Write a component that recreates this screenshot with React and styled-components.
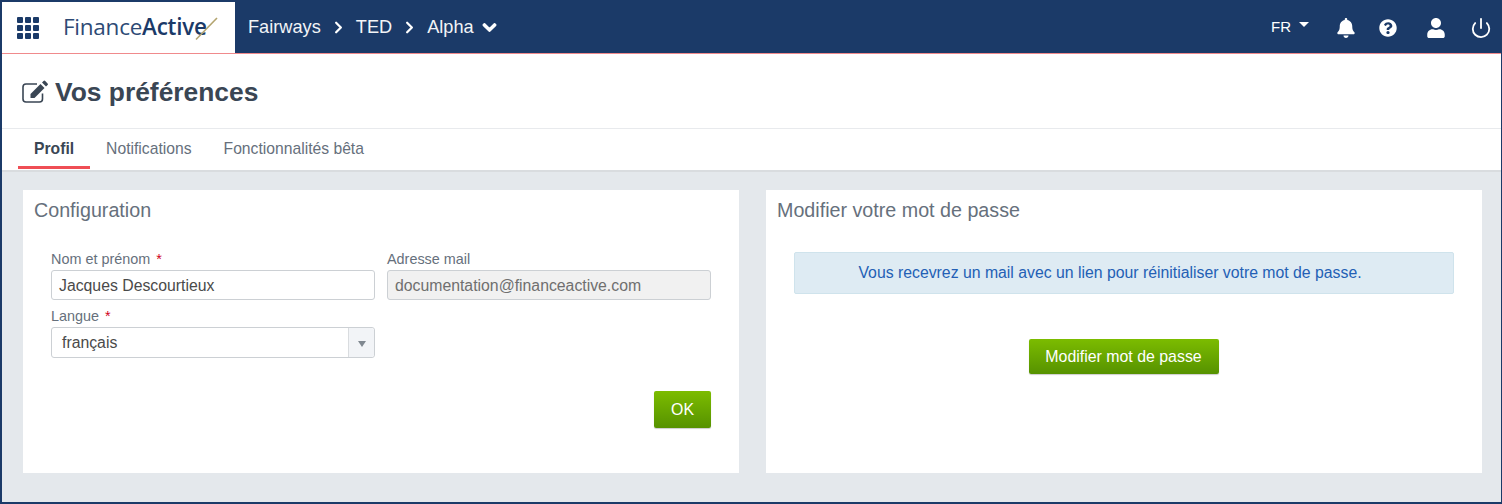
import styled, { createGlobalStyle } from "styled-components";
import { FaBell, FaChevronDown, FaQuestionCircle, FaUser } from "react-icons/fa";
import { ChevronRight, Power } from "lucide-react";

const GlobalStyle = createGlobalStyle`
  html, body {
    margin: 0;
    padding: 0;
    background: #e4e8ec;
    font-family: "Liberation Sans", Arial, sans-serif;
  }
  * { box-sizing: border-box; }
`;

const Frame = styled.div`
  width: 1502px;
  height: 504px;
  display: flex;
  flex-direction: column;
  overflow: hidden;
  background: #e4e8ec;
  border: 2px solid #1b3a68;
  border-right-width: 1px;
`;

const Header = styled.header`
  height: 52px;
  flex: none;
  display: flex;
  background: #1b3a68;
  border-bottom: 1px solid #f08a8c;
`;

const Brand = styled.div`
  width: 233px;
  display: flex;
  align-items: center;
  padding-left: 15px;
  background: #fff;
`;

const Grid = styled.div`
  display: grid;
  grid-template-columns: repeat(3, 6px);
  grid-auto-rows: 6px;
  gap: 2px;
  margin-right: 24px;
`;

const Dot = styled.span`
  background: #1b3a68;
  border-radius: 1px;
`;

const Logo = styled.div`
  position: relative;
  font-family: "Open Sans", "Liberation Sans", sans-serif;
  font-size: 22.5px;
  font-weight: 400;
  letter-spacing: -0.25px;
  color: #2d4a75;
  margin-top: -3px;
  b {
    font-weight: 600;
    color: #1b3a68;
  }
`;

const LogoSlash = styled.svg`
  position: absolute;
  left: 132px;
  top: 6px;
`;

const Crumbs = styled.nav`
  display: flex;
  align-items: center;
  gap: 8px;
  padding-left: 13px;
  color: #fff;
  font-size: 18.2px;
  flex: 1;
`;

const Crumb = styled.span`
  color: #f2f4f7;
`;

const Actions = styled.div`
  display: flex;
  align-items: center;
  color: #fff;
  padding-right: 9px;
`;

const Lang = styled.div`
  display: flex;
  align-items: center;
  gap: 8px;
  font-size: 15px;
  margin-right: 27px;
  padding-bottom: 2px;
  &::after {
    content: "";
    margin-top: -4px;
    border-left: 5px solid transparent;
    border-right: 5px solid transparent;
    border-top: 5px solid #fff;
  }
`;

const Action = styled.span`
  display: flex;
  align-items: center;
  justify-content: center;
  width: ${(p) => p.$w}px;
  margin-left: ${(p) => p.$gap}px;
`;

const TitleBar = styled.div`
  height: 75px;
  flex: none;
  display: flex;
  align-items: center;
  gap: 6px;
  padding: 2px 0 0 20px;
  background: #fff;
  border-bottom: 1px solid #e8eaed;
  color: #3a4654;
`;

const Title = styled.h1`
  margin: 0;
  font-size: 26.4px;
  font-weight: 700;
  color: #3a4654;
`;

const Tabs = styled.div`
  height: 43px;
  flex: none;
  display: flex;
  padding-left: 16px;
  background: #fff;
  border-bottom: 2px solid #d9dcdf;
`;

const Tab = styled.div`
  height: 40px;
  padding: 11px 16px 0;
  font-size: 15.7px;
  font-weight: ${(p) => (p.$active ? 700 : 400)};
  color: ${(p) => (p.$active ? "#3a4654" : "#66707c")};
  border-bottom: ${(p) => (p.$active ? "3px solid #ef4e55" : "none")};
`;

const Content = styled.main`
  display: grid;
  grid-template-columns: 716px 716px;
  column-gap: 27px;
  padding: 18px 0 0 21px;
`;

const Card = styled.section`
  height: 283px;
  background: #fff;
  padding: 9px 11px;
  display: flex;
  flex-direction: column;
`;

const CardTitle = styled.h2`
  margin: 0;
  font-size: 19.7px;
  line-height: 22px;
  font-weight: 400;
  color: #66707c;
`;

const Form = styled.div`
  display: grid;
  grid-template-columns: 324px 324px;
  column-gap: 12px;
  padding: 29px 0 0 17px;
`;

const Field = styled.div`
  display: flex;
  flex-direction: column;
  margin-bottom: 7px;
`;

const Label = styled.label`
  font-size: 14.4px;
  line-height: 18px;
  margin-bottom: 2px;
  color: #66707c;
  em {
    font-style: normal;
    color: #d0021b;
    margin-left: 2px;
  }
`;

const Input = styled.div`
  height: 30px;
  padding: 1px 0 0 7px;
  display: flex;
  align-items: center;
  font-size: 15.8px;
  border: 1px solid #ccd0d4;
  border-radius: 3px;
  color: ${(p) => (p.$disabled ? "#6f6f6f" : "#4a4a4a")};
  background: ${(p) => (p.$disabled ? "#f1f1f1" : "#fff")};
`;

const Select = styled.div`
  height: 31px;
  display: flex;
  align-items: center;
  justify-content: space-between;
  padding-left: 10px;
  font-size: 15.8px;
  color: #4a4a4a;
  border: 1px solid #ccd0d4;
  border-radius: 3px;
`;

const SelectArrow = styled.span`
  width: 26px;
  height: 100%;
  display: flex;
  align-items: center;
  justify-content: center;
  background: #f2f4f7;
  border-left: 1px solid #d9dcdf;
  border-radius: 0 3px 3px 0;
  &::after {
    content: "";
    margin-top: 2px;
    border-left: 4px solid transparent;
    border-right: 4px solid transparent;
    border-top: 6px solid #808890;
  }
`;

const FormActions = styled.div`
  display: flex;
  justify-content: flex-end;
  padding-top: 26px;
  width: 677px;
`;

const Button = styled.button`
  height: ${(p) => p.$h}px;
  width: ${(p) => p.$w}px;
  padding: 0;
  border: none;
  border-radius: 2px;
  font-family: inherit;
  font-size: 15.9px;
  color: #fff;
  background: linear-gradient(#7cbc00, #569200);
  box-shadow: 0 1px 1px rgba(0, 0, 0, 0.2);
`;

const Notice = styled.div`
  height: 42px;
  margin: 31px 17px 0;
  padding-right: 28px;
  display: flex;
  align-items: center;
  justify-content: center;
  font-size: 15.8px;
  color: #2360b5;
  background: #deebf3;
  border: 1px solid #cfe3ec;
  border-radius: 2px;
`;

const CenteredAction = styled.div`
  display: flex;
  justify-content: center;
  padding: 45px 1px 0 0;
`;

const EditIcon = () => (
  <svg width="27" height="24" viewBox="0 0 27 24">
    <path
      d="M20.5 13.5 V19 a3 3 0 0 1 -3 3 H4 a3 3 0 0 1 -3 -3 V7 a3 3 0 0 1 3 -3 H15"
      stroke="currentColor"
      strokeWidth="1.6"
      fill="none"
    />
    <path d="M8.5 14 L18.5 4 L22.5 8 L12.5 18 H8.5 Z" fill="currentColor" />
    <path d="M20 2.5 L21.5 1 a1.2 1.2 0 0 1 1.7 0 L25.6 3.4 a1.2 1.2 0 0 1 0 1.7 L24 6.5 Z" fill="currentColor" />
  </svg>
);

export default function App() {
  return (
    <>
      <GlobalStyle />
      <Frame>
        <Header>
          <Brand>
            <Grid>
              {Array.from({ length: 9 }, (_, i) => (
                <Dot key={i} />
              ))}
            </Grid>
            <Logo>
              Finance<b>Active</b>
              <LogoSlash width="24" height="24" viewBox="0 0 24 24">
                <path d="M1 22.5 L22 1" stroke="#b3a46f" strokeWidth="1.6" fill="none" />
              </LogoSlash>
            </Logo>
          </Brand>
          <Crumbs>
            <Crumb>Fairways</Crumb>
            <ChevronRight size={19} strokeWidth={2.8} />
            <Crumb>TED</Crumb>
            <ChevronRight size={19} strokeWidth={2.8} />
            <Crumb>Alpha</Crumb>
            <FaChevronDown size={15} stroke="currentColor" strokeWidth={40} />
          </Crumbs>
          <Actions>
            <Lang>FR</Lang>
            <Action $w={20} $gap={0}>
              <FaBell size={20} />
            </Action>
            <Action $w={18} $gap={23}>
              <FaQuestionCircle size={18} />
            </Action>
            <Action $w={20} $gap={29}>
              <FaUser size={20} />
            </Action>
            <Action $w={22} $gap={24}>
              <Power size={22} strokeWidth={2} />
            </Action>
          </Actions>
        </Header>
        <TitleBar>
          <EditIcon />
          <Title>Vos préférences</Title>
        </TitleBar>
        <Tabs>
          <Tab $active>Profil</Tab>
          <Tab>Notifications</Tab>
          <Tab>Fonctionnalités bêta</Tab>
        </Tabs>
        <Content>
          <Card>
            <CardTitle>Configuration</CardTitle>
            <Form>
              <Field>
                <Label>
                  Nom et prénom <em>*</em>
                </Label>
                <Input>Jacques Descourtieux</Input>
              </Field>
              <Field>
                <Label>Adresse mail</Label>
                <Input $disabled>documentation@financeactive.com</Input>
              </Field>
              <Field>
                <Label>
                  Langue <em>*</em>
                </Label>
                <Select>
                  français
                  <SelectArrow />
                </Select>
              </Field>
            </Form>
            <FormActions>
              <Button $w={57} $h={37}>OK</Button>
            </FormActions>
          </Card>
          <Card>
            <CardTitle>Modifier votre mot de passe</CardTitle>
            <Notice>Vous recevrez un mail avec un lien pour réinitialiser votre mot de passe.</Notice>
            <CenteredAction>
              <Button $w={190} $h={35}>Modifier mot de passe</Button>
            </CenteredAction>
          </Card>
        </Content>
      </Frame>
    </>
  );
}
